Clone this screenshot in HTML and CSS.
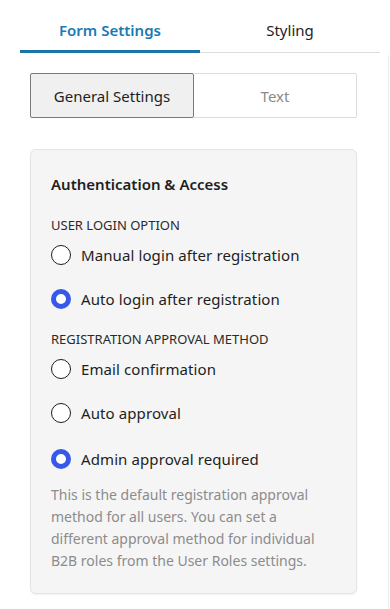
FILE: index.html
```html
<!DOCTYPE html>
<html>
<head>
<meta charset="utf-8">
<link rel="stylesheet" href="styles.css">
</head>
<body>
<div class="page">
  <div class="panel">
    <div class="tabs">
      <div class="tab active">Form Settings</div>
      <div class="tab">Styling</div>
    </div>
    <div class="content">
      <div class="seg">
        <div class="seg-btn on">General Settings</div>
        <div class="seg-btn">Text</div>
      </div>
      <div class="card">
        <div class="card-title">Authentication &amp; Access</div>
        <div class="group-label first">USER LOGIN OPTION</div>
        <div class="radio-row"><span class="radio"></span><span>Manual login after registration</span></div>
        <div class="radio-row"><span class="radio checked"></span><span>Auto login after registration</span></div>
        <div class="group-label">REGISTRATION APPROVAL METHOD</div>
        <div class="radio-row"><span class="radio"></span><span>Email confirmation</span></div>
        <div class="radio-row"><span class="radio"></span><span>Auto approval</span></div>
        <div class="radio-row last"><span class="radio checked"></span><span>Admin approval required</span></div>
        <p class="help">This is the default registration approval method for all users. You can set a different approval method for individual B2B roles from the User Roles settings.</p>
      </div>
    </div>
  </div>
  <div class="edge"></div>
</div>
</body>
</html>
```
FILE: styles.css
```css
* { box-sizing: border-box; }
html, body { margin: 0; padding: 0; background: #fff; }
body {
  font-family: "Noto Sans", "Open Sans", sans-serif;
  color: #1e1e1e;
  font-size: 15px;
}
.page {
  display: flex;
  height: 609px;
  overflow: hidden;
}
.panel {
  width: 360px;
  margin-left: 20px;
}
.edge {
  margin-left: 8px;
  margin-top: 55px;
  width: 1px;
  background: #efefef;
}
.tabs {
  display: flex;
  border-bottom: 1px solid #dddddd;
  height: 53px;
}
.tab {
  flex: 1;
  text-align: center;
  padding-top: 19px;
  line-height: 22px;
  font-size: 15px;
}
.tab.active {
  color: #1a7ab3;
  font-weight: 600;
  border-bottom: 3px solid #1c74a6;
  margin-bottom: -1px;
}
.content {
  padding: 20px 23px 0 10px;
}
.seg {
  display: flex;
  height: 45px;
}
.seg-btn {
  flex: 1;
  display: flex;
  align-items: center;
  justify-content: center;
  border: 1px solid #dcdcdc;
  border-left: none;
  color: #8a8a8a;
  background: #fff;
  border-radius: 0 2px 2px 0;
}
.seg-btn.on {
  background: #f0f0f0;
  border: 1px solid #7a7a7a;
  color: #1e1e1e;
  border-radius: 2px;
}
.card {
  margin-top: 31px;
  background: #f5f5f5;
  border: 1px solid #e4e4e4;
  border-radius: 6px;
  box-shadow: 0 1px 2px rgba(0,0,0,0.06);
  padding: 24px 20px 21px 20px;
}
.card-title {
  font-weight: 600;
  font-size: 15px;
  line-height: 20px;
}
.group-label {
  font-size: 13px;
  line-height: 18px;
  color: #2a2a2a;
  margin-top: 19px;
}
.group-label.first { margin-top: 22px; }
.radio-row {
  display: flex;
  align-items: center;
  gap: 10px;
  height: 24px;
  margin-top: 9px;
  font-size: 15px;
  letter-spacing: 0.1px;
  color: #1e1e1e;
}
.radio-row + .radio-row { margin-top: 20px; }
.radio-row + .radio-row.last { margin-top: 22px; }
.radio {
  width: 20px;
  height: 20px;
  border-radius: 50%;
  border: 1.5px solid #1e1e1e;
  background: #fff;
  flex: none;
}
.radio.checked {
  border: 5px solid #3858e9;
}
.help {
  margin: 13px 0 0 0;
  font-size: 14px;
  line-height: 22px;
  color: #8c8c8c;
}
```
